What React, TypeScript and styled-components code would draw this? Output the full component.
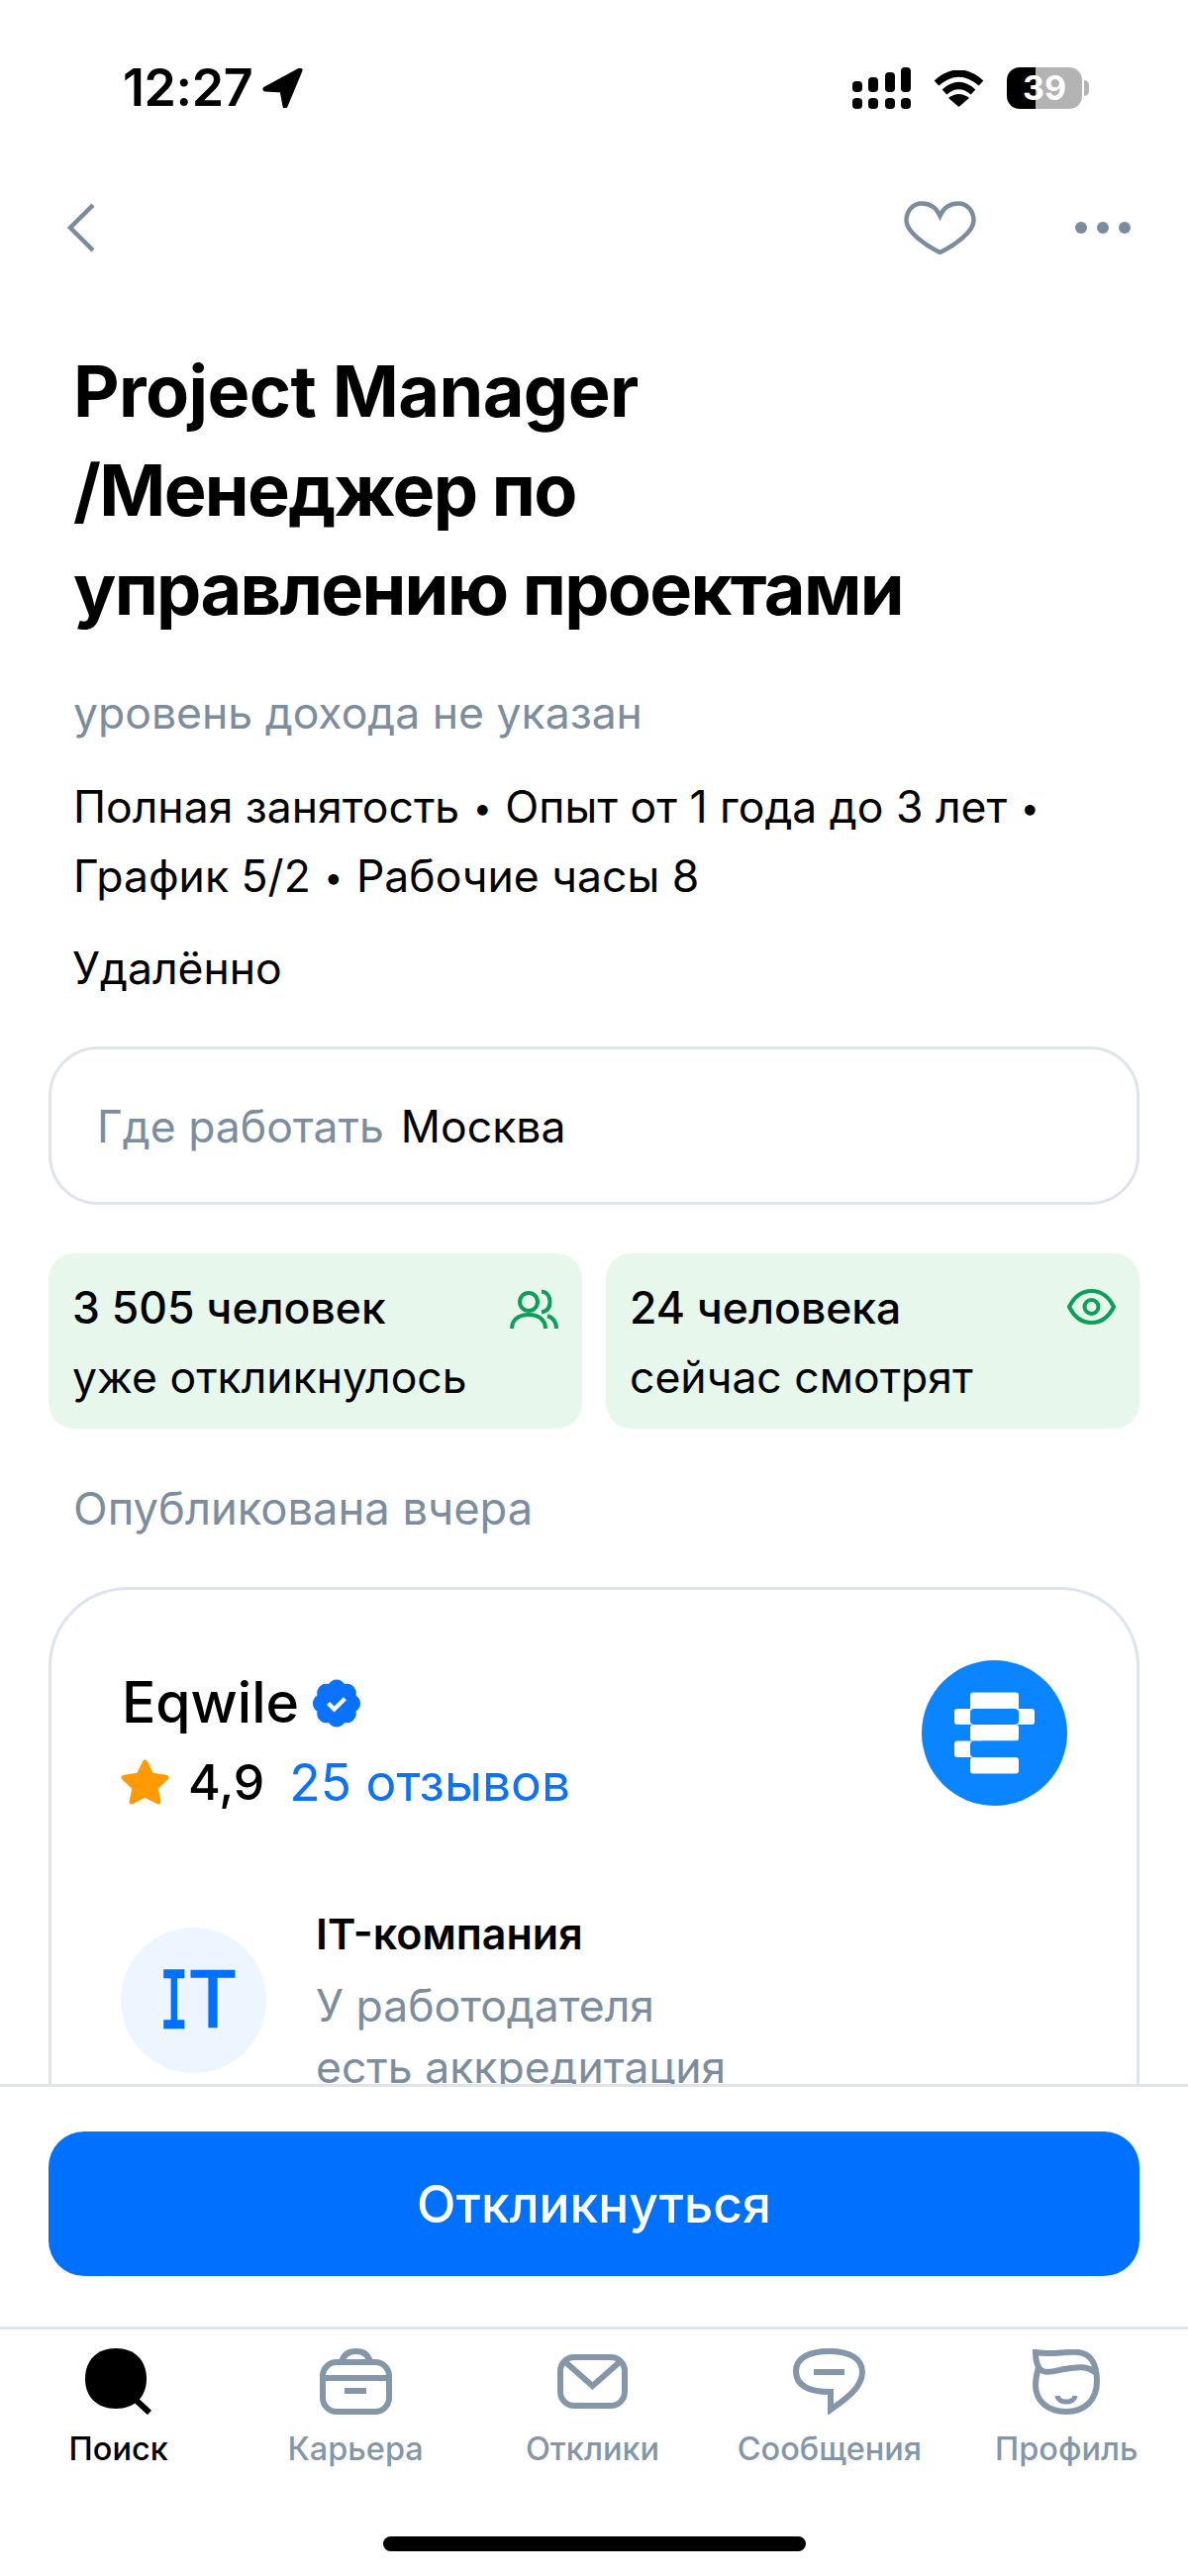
import React from "react";
import styled, { createGlobalStyle } from "styled-components";

const GlobalStyle = createGlobalStyle`
  html, body {
    margin: 0;
    padding: 0;
    background: #ffffff;
    font-family: "Inter", "Noto Sans", sans-serif;
    color: #000000;
  }
  * {
    box-sizing: border-box;
  }
`;

const GREY = "#7c8d9e";
const ICON_GREY = "#8496a7";
const BLUE = "#0070ff";
const GREEN = "#0a9f5a";

const Page = styled.div`
  width: 1200px;
  height: 2602px;
  display: flex;
  flex-direction: column;
  overflow: hidden;
  background: #ffffff;
`;

const StatusBar = styled.div`
  height: 150px;
  flex: none;
  display: flex;
  align-items: flex-start;
  justify-content: space-between;
  padding: 68px 107px 0 124px;
`;

const StatusLeft = styled.div`
  display: flex;
  align-items: center;
  gap: 10px;
  height: 42px;
`;

const Clock = styled.span`
  font-size: 52px;
  font-weight: 600;
  line-height: 40px;
  letter-spacing: -0.4px;
`;

const StatusRight = styled.div`
  display: flex;
  align-items: center;
  height: 42px;
  gap: 23px;
`;

const Battery = styled.div`
  position: relative;
  width: 76px;
  height: 42px;
  border-radius: 13px;
  background: linear-gradient(to right, #000000 0 29px, #b3b3b3 29px 100%);
  color: #ffffff;
  font-size: 34px;
  font-weight: 700;
  line-height: 42px;
  text-align: center;

  &::after {
    content: "";
    position: absolute;
    right: -7px;
    top: 13px;
    width: 5px;
    height: 16px;
    border-radius: 0 5px 5px 0;
    background: #b3b3b3;
  }
`;

const NavBar = styled.div`
  height: 160px;
  flex: none;
  display: flex;
  align-items: center;
  justify-content: space-between;
  padding: 0 58px 0 67px;
`;

const NavActions = styled.div`
  display: flex;
  align-items: center;
  gap: 100px;
`;

const Content = styled.div`
  flex: 1;
  min-height: 0;
  overflow: hidden;
  padding: 35px 49px 0;
`;

const Title = styled.h1`
  margin: 0 0 0 25px;
  font-size: 72px;
  line-height: 100px;
  font-weight: 700;
  letter-spacing: -0.6px;
`;

const TitleCyrillic = styled.span`
  letter-spacing: -1.7px;
`;

const Salary = styled.div`
  margin: 45px 0 0 25px;
  font-size: 44.5px;
  line-height: 60px;
  color: ${GREY};
`;

const Details = styled.div`
  margin: 30px 0 0 25px;
  font-size: 44.5px;
  line-height: 70px;
`;

const Dot = styled.span`
  font-size: 34px;
  line-height: 1;
  vertical-align: 3px;
  margin: 0 1px;
`;

const Remote = styled.div`
  margin: 23px 0 0 24px;
  font-size: 44.5px;
  line-height: 70px;
`;

const WorkPlace = styled.div`
  margin-top: 44px;
  height: 160px;
  border: 3px solid #dde4ee;
  border-radius: 50px;
  display: flex;
  align-items: center;
  gap: 17px;
  padding: 2px 0 0 46px;
  font-size: 44.5px;
`;

const PlaceLabel = styled.span`
  color: ${GREY};
`;

const StatsRow = styled.div`
  margin-top: 49px;
  display: grid;
  grid-template-columns: 1fr 1fr;
  gap: 24px;
`;

const StatCard = styled.div`
  height: 177px;
  border-radius: 26px;
  background: #e7f7ec;
  padding: 20px 24px 0;
  display: flex;
  justify-content: space-between;
`;

const StatText = styled.div`
  font-size: 44.5px;
  line-height: 70px;
`;

const StatValue = styled.div`
  font-weight: 500;
`;

const StatIcon = styled.svg`
  margin-top: 16px;
`;

const Published = styled.div`
  margin: 51px 0 0 25px;
  font-size: 45.3px;
  line-height: 60px;
  color: ${GREY};
`;

const CompanyCard = styled.div`
  margin-top: 49px;
  border: 3px solid #dde4ee;
  border-radius: 80px;
  padding: 71px 70px 60px 70px;
`;

const CompanyHead = styled.div`
  display: flex;
  justify-content: space-between;
  align-items: flex-start;
`;

const CompanyName = styled.div`
  display: flex;
  align-items: center;
  gap: 14px;
  margin: 8px 0 0 1px;
  font-size: 57px;
  line-height: 70px;
  font-weight: 500;
`;

const RatingRow = styled.div`
  display: flex;
  align-items: center;
  margin-top: 10px;
  font-size: 50px;
  line-height: 70px;
  font-weight: 500;
`;

const RatingValue = styled.span`
  margin-left: 19px;
`;

const Reviews = styled.span`
  margin-left: 25px;
  color: #0a72ff;
  font-size: 51.5px;
  font-weight: 400;
`;

const InfoRow = styled.div`
  display: flex;
  gap: 50px;
  margin-top: 87px;
`;

const InfoBadge = styled.div`
  flex: none;
  width: 147px;
  height: 147px;
  border-radius: 50%;
  background: #edf5ff;
  margin-top: 25px;
  display: flex;
  align-items: center;
  justify-content: center;
  padding-right: 8px;
  color: ${BLUE};
  font-family: "DejaVu Sans Mono", monospace;
  font-size: 78px;
  font-weight: 400;
  letter-spacing: -9px;
  -webkit-text-stroke: 1.5px ${BLUE};
`;

const BadgeNarrowLetter = styled.span`
  display: inline-block;
  transform: scaleX(0.62);
  -webkit-text-stroke: 2.5px ${BLUE};
`;

const InfoTitle = styled.div`
  font-size: 43px;
  line-height: 62px;
  font-weight: 600;
`;

const InfoText = styled.div`
  margin-top: 11px;
  font-size: 44.5px;
  line-height: 62px;
  color: ${GREY};
`;

const ActionPanel = styled.div`
  flex: none;
  height: 245px;
  border-top: 3px solid #dde4ee;
  padding: 45px 49px 0;
`;

const ApplyButton = styled.button`
  width: 100%;
  height: 146px;
  border: none;
  border-radius: 36px;
  background: ${BLUE};
  color: #ffffff;
  font-family: inherit;
  font-size: 51.5px;
  font-weight: 500;
`;

const TabBar = styled.div`
  flex: none;
  height: 252px;
  border-top: 3px solid #dde4ee;
  position: relative;
  display: grid;
  grid-template-columns: repeat(5, 1fr);
  align-items: start;
  padding: 19px 3px 0 0;
`;

const Tab = styled.div<{ $active?: boolean }>`
  display: flex;
  flex-direction: column;
  align-items: center;
  color: ${(p) => (p.$active ? "#000000" : ICON_GREY)};
  font-size: 32.5px;
  font-weight: 500;
`;

const TabIconBox = styled.div`
  height: 67px;
  display: flex;
  align-items: center;
  justify-content: center;
`;

const TabLabel = styled.span`
  margin-top: 15px;
  line-height: 40px;
`;

const HomeBar = styled.div`
  position: absolute;
  left: 387px;
  bottom: 25px;
  width: 427px;
  height: 15px;
  border-radius: 8px;
  background: #000000;
`;

const SignalIcon = () => (
  <svg width="59" height="42" viewBox="0 0 59 42" fill="#000">
    <rect x="0" y="14" width="10" height="11" rx="4" />
    <rect x="16" y="10" width="10" height="15" rx="4" />
    <rect x="33" y="5" width="10" height="20" rx="4" />
    <rect x="49" y="0" width="10" height="25" rx="4" />
    <rect x="0" y="31" width="10" height="11" rx="4" />
    <rect x="16" y="31" width="10" height="11" rx="4" />
    <rect x="33" y="31" width="10" height="11" rx="4" />
    <rect x="49" y="31" width="10" height="11" rx="4" />
  </svg>
);

const WifiIcon = () => (
  <svg width="51" height="37" viewBox="0 0 51 37" fill="none" stroke="#000" strokeWidth="7">
    <path d="M3 13 Q25.5 -7 48 13" />
    <path d="M11 22 Q25.5 9 40 22" />
    <path d="M15 28 Q25.5 20 36 28 L25.5 37 Z" fill="#000" stroke="none" />
  </svg>
);

const LocationIcon = () => (
  <svg width="41" height="40" viewBox="0 0 41 40" fill="#000">
    <path
      d="M38 2 L3 21 L20 22 L23 38 Z"
      stroke="#000"
      strokeWidth="5"
      strokeLinejoin="round"
    />
  </svg>
);

const BackIcon = () => (
  <svg width="28" height="50" viewBox="0 0 28 50" fill="none" stroke="#7a8c9e" strokeWidth="4.5">
    <path d="M27 2 L4 25 L27 48" />
  </svg>
);

const HeartIcon = () => (
  <svg width="73" height="54" viewBox="0 0 73 54" fill="none" stroke="#7a8c9e" strokeWidth="4.5">
    <path d="M36.5 15 C32 5 24 2.500 18 2.500 C9 2.500 2.500 10 2.500 20 C2.500 31 22 45 36.5 52 C51 45 70.500 31 70.500 20 C70.500 10 64 2.500 55 2.500 C49 2.500 41 5 36.5 15Z" />
  </svg>
);

const DotsIcon = () => (
  <svg width="56" height="12" viewBox="0 0 56 12" fill="#7a8c9e">
    <circle cx="6" cy="6" r="6" />
    <circle cx="28" cy="6" r="6" />
    <circle cx="50" cy="6" r="6" />
  </svg>
);

const PeopleIcon = () => (
  <StatIcon width="49" height="40" viewBox="0 0 49 40" fill="none" stroke={GREEN} strokeWidth="4">
    <circle cx="19" cy="13" r="9" />
    <path d="M32 2.5 C38 3 40.5 8 40.5 13 C40.5 18 38 22.500 32 23.500" />
    <path d="M2 40 C2 31 9 26 19 26 C29 26 36 31 36 40" />
    <path d="M38 27 C44 29 47 34 47 40" />
  </StatIcon>
);

const EyeIcon = () => (
  <StatIcon width="49" height="36" viewBox="0 0 49 36" fill="none" stroke={GREEN} strokeWidth="4">
    <path d="M2 18 C8 6 16 2 24.500 2 C33 2 41 6 47 18 C41 30 33 34 24.500 34 C16 34 8 30 2 18Z" />
    <circle cx="24.500" cy="18" r="7" strokeWidth="4" />
  </StatIcon>
);

const VerifiedIcon = () => (
  <svg width="48" height="49" viewBox="2 2 20 20">
    <path
      d="M3.85 8.62a4 4 0 0 1 4.78-4.77 4 4 0 0 1 6.74 0 4 4 0 0 1 4.78 4.78 4 4 0 0 1 0 6.74 4 4 0 0 1-4.77 4.78 4 4 0 0 1-6.75 0 4 4 0 0 1-4.78-4.77 4 4 0 0 1 0-6.76Z"
      fill="#0a72ff"
    />
    <path d="m8.500 12 2.500 2.500 4.500-4.500" fill="none" stroke="#fff" strokeWidth="1.800" />
  </svg>
);

const StarIcon = () => (
  <svg width="49" height="46" viewBox="0 0 49 46" fill="#ff9a00" stroke="#ff9a00" strokeWidth="5" strokeLinejoin="round">
    <polygon points="24.5,3 31,16 46,18.500 35,29 38,43 24.5,36 11,43 14,29 3,18.500 18,16" />
  </svg>
);

const CompanyLogo = () => (
  <svg width="147" height="147" viewBox="0 0 147 147">
    <circle cx="73.500" cy="73.500" r="73.500" fill="#0a84ff" />
    <rect x="49" y="32.500" width="49" height="33" rx="3" fill="#fff" />
    <rect x="33" y="49" width="81" height="16" rx="3" fill="#fff" />
    <rect x="49" y="49" width="49" height="16" rx="4" fill="#0a84ff" />
    <rect x="49" y="65" width="49" height="16.500" rx="3" fill="#fff" />
    <rect x="33" y="81.500" width="30" height="16.500" rx="3" fill="#fff" />
    <rect x="49" y="81.500" width="60" height="16.500" rx="4" fill="#0a84ff" />
    <rect x="49" y="98" width="49" height="16.500" rx="3" fill="#fff" />
  </svg>
);

const SearchTabIcon = () => (
  <svg width="68" height="67" viewBox="0 0 68 67" fill="#000">
    <path d="M31 0 C50 0 62 12 62 31 C62 49 50 61 31 61 C12 61 0 49 0 31 C0 12 12 0 31 0Z" />
    <path d="M51 52 L65 65" stroke="#000" strokeWidth="6" />
  </svg>
);

const CareerTabIcon = () => (
  <svg width="73" height="67" viewBox="0 0 73 67" fill="none" stroke={ICON_GREY} strokeWidth="6">
    <rect x="3" y="14" width="67" height="50" rx="14" />
    <path d="M3 30 H70" />
    <path d="M22 14 C24 6 30 3 36.500 3 C43 3 49 6 51 14" />
    <path d="M25 43 H47" />
  </svg>
);

const ResponsesTabIcon = () => (
  <svg width="71" height="55" viewBox="0 0 71 55" fill="none" stroke={ICON_GREY} strokeWidth="6">
    <rect x="3" y="3" width="65" height="49" rx="14" />
    <path d="M6 6 L35.500 32 L65 6" />
  </svg>
);

const MessagesTabIcon = () => (
  <svg width="73" height="67" viewBox="0 0 73 67" fill="none" stroke={ICON_GREY} strokeWidth="6">
    <path d="M38 44 C14 44 3 37 3 23 C3 10 16 3 36.500 3 C57 3 70 10 70 24 C70 40 52 52 38 62 Z" />
    <path d="M21 24 H52" />
  </svg>
);

const ProfileTabIcon = () => (
  <svg width="68" height="66" viewBox="0 0 68 66" fill="none" stroke={ICON_GREY} strokeWidth="6">
    <path d="M3 3 C18 6 32 2 46 3 C58 4 65 14 65 32 C65 52 52 63 34 63 C15 63 3 52 3 36 C3 28 5 22 6 18 C3 12 3 8 3 3Z" />
    <path d="M6 18 C10 26 22 22 32 20 C44 18 56 16 64 24" />
    <path d="M25 47 C26 55 42 55 43 47" strokeWidth="5" />
  </svg>
);

const tabs = [
  { label: "Поиск", icon: <SearchTabIcon />, active: true },
  { label: "Карьера", icon: <CareerTabIcon /> },
  { label: "Отклики", icon: <ResponsesTabIcon /> },
  { label: "Сообщения", icon: <MessagesTabIcon /> },
  { label: "Профиль", icon: <ProfileTabIcon /> },
];

const App: React.FC = () => {
  return (
    <Page>
      <GlobalStyle />
      <StatusBar>
        <StatusLeft>
          <Clock>12:27</Clock>
          <LocationIcon />
        </StatusLeft>
        <StatusRight>
          <SignalIcon />
          <WifiIcon />
          <Battery>39</Battery>
        </StatusRight>
      </StatusBar>

      <NavBar>
        <BackIcon />
        <NavActions>
          <HeartIcon />
          <DotsIcon />
        </NavActions>
      </NavBar>

      <Content>
        <Title>
          Project Manager
          <br />
          <TitleCyrillic>/Менеджер по</TitleCyrillic>
          <br />
          <TitleCyrillic>управлению проектами</TitleCyrillic>
        </Title>
        <Salary>уровень дохода не указан</Salary>
        <Details>
          Полная занятость <Dot>•</Dot> Опыт от 1 года до 3 лет <Dot>•</Dot>
          <br />
          График 5/2 <Dot>•</Dot> Рабочие часы 8
        </Details>
        <Remote>Удалённо</Remote>

        <WorkPlace>
          <PlaceLabel>Где работать</PlaceLabel>
          <span>Москва</span>
        </WorkPlace>

        <StatsRow>
          <StatCard>
            <StatText>
              <StatValue>3 505 человек</StatValue>
              <div>уже откликнулось</div>
            </StatText>
            <PeopleIcon />
          </StatCard>
          <StatCard>
            <StatText>
              <StatValue>24 человека</StatValue>
              <div>сейчас смотрят</div>
            </StatText>
            <EyeIcon />
          </StatCard>
        </StatsRow>

        <Published>Опубликована вчера</Published>

        <CompanyCard>
          <CompanyHead>
            <div>
              <CompanyName>
                Eqwile
                <VerifiedIcon />
              </CompanyName>
              <RatingRow>
                <StarIcon />
                <RatingValue>4,9</RatingValue>
                <Reviews>25 отзывов</Reviews>
              </RatingRow>
            </div>
            <CompanyLogo />
          </CompanyHead>
          <InfoRow>
            <InfoBadge>
              <BadgeNarrowLetter>I</BadgeNarrowLetter>T
            </InfoBadge>
            <div>
              <InfoTitle>IT-компания</InfoTitle>
              <InfoText>
                У работодателя
                <br />
                есть аккредитация
              </InfoText>
            </div>
          </InfoRow>
        </CompanyCard>
      </Content>

      <ActionPanel>
        <ApplyButton>Откликнуться</ApplyButton>
      </ActionPanel>

      <TabBar>
        {tabs.map((tab) => (
          <Tab key={tab.label} $active={tab.active}>
            <TabIconBox>{tab.icon}</TabIconBox>
            <TabLabel>{tab.label}</TabLabel>
          </Tab>
        ))}
        <HomeBar />
      </TabBar>
    </Page>
  );
};

export default App;
